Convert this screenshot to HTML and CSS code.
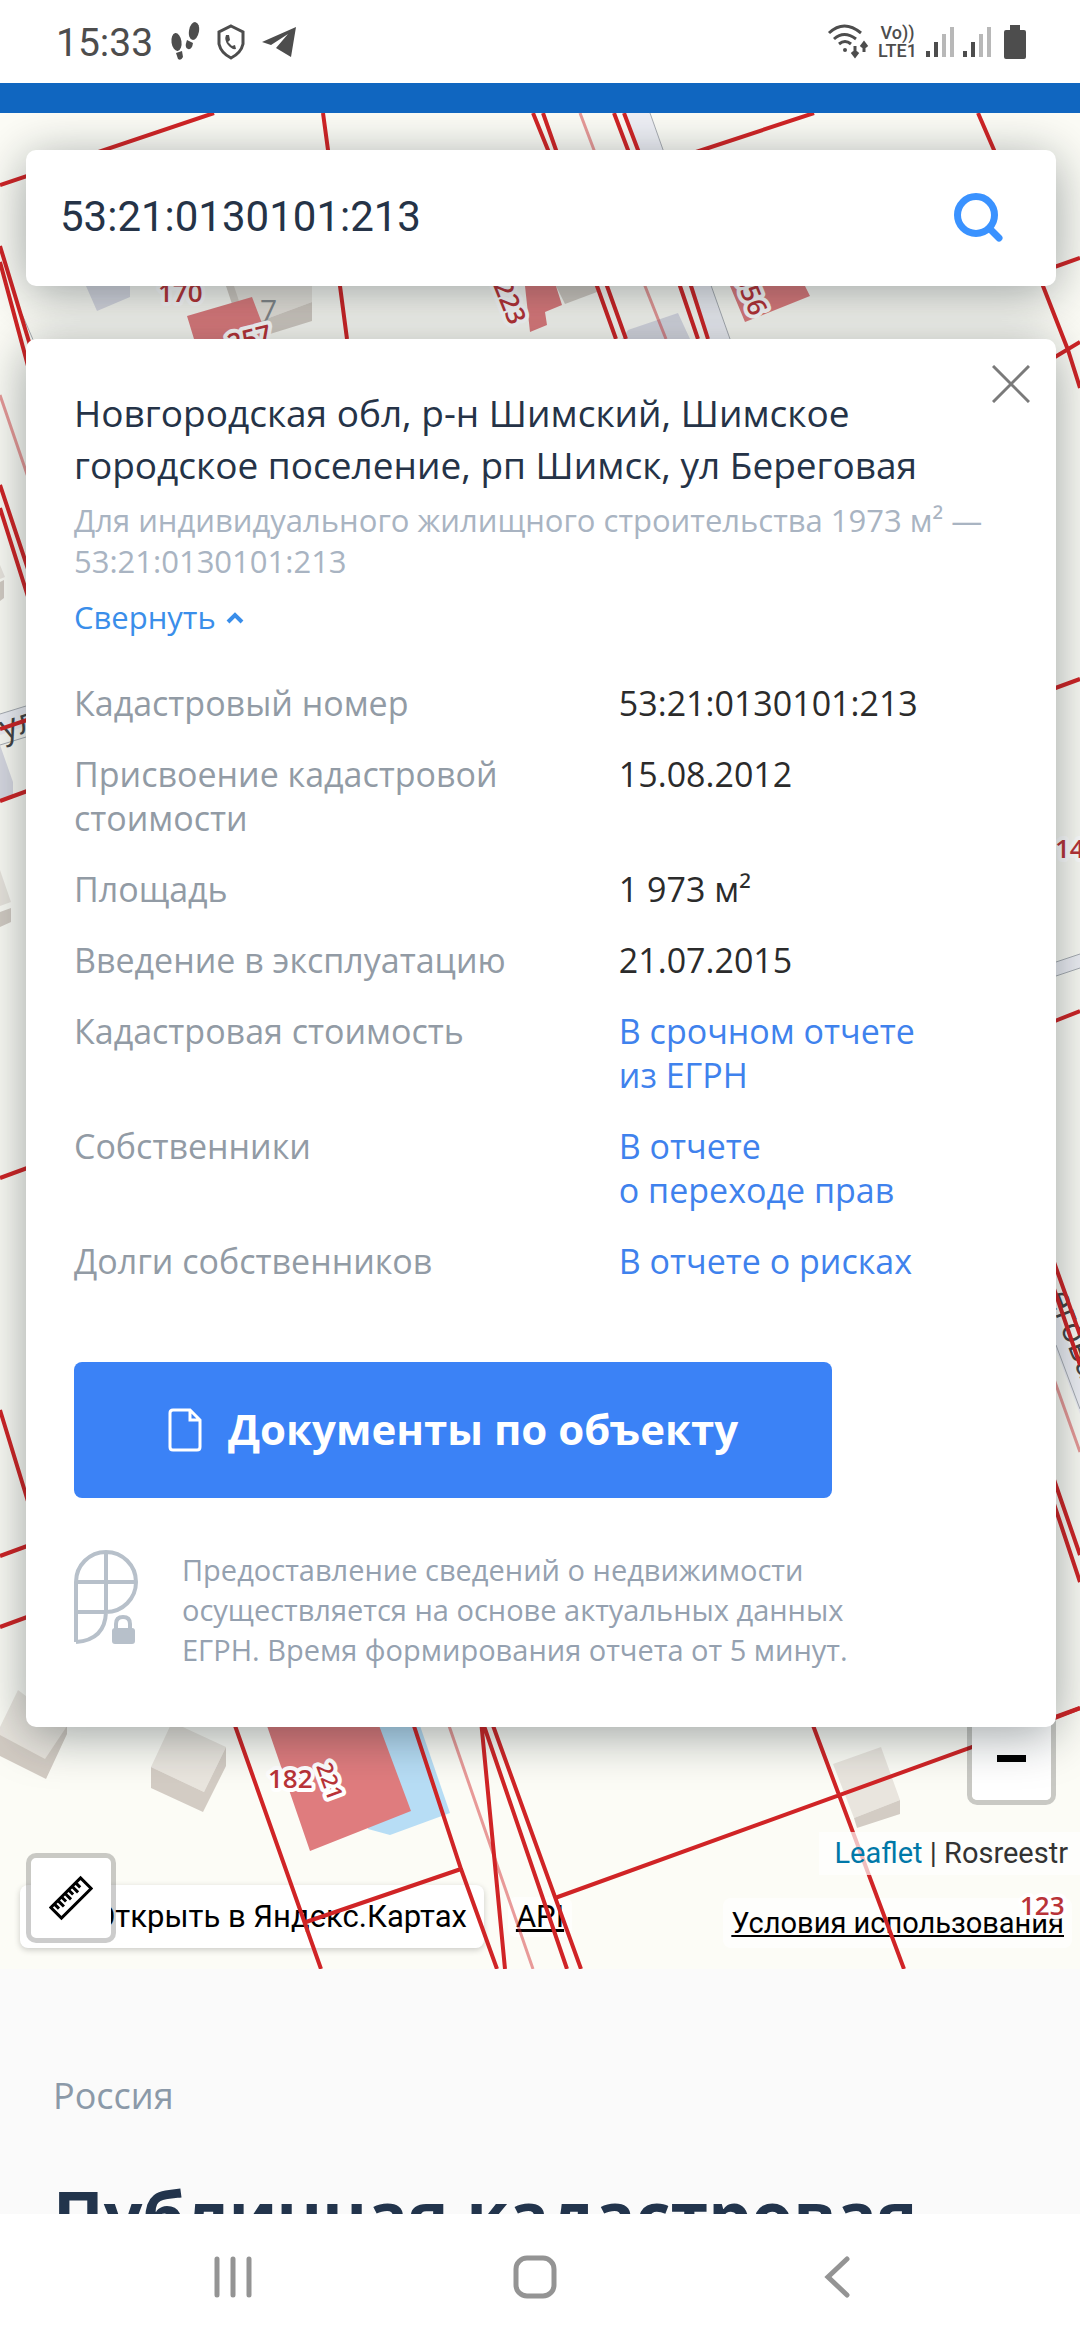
FILE: index.html
```
<!DOCTYPE html>
<html lang="ru">
<head>
<meta charset="utf-8">
<meta name="viewport" content="width=device-width, initial-scale=1">
<title>Публичная кадастровая карта</title>
<link rel="stylesheet" href="styles.css">
</head>
<body>
<div class="statusbar">
	<div class="status-group">
		<span class="clock">15:33</span>
		<svg class="st-icon" width="30" height="40" viewBox="0 0 30 40">
			<ellipse cx="6.500" cy="20" rx="5" ry="9" transform="rotate(-8 6.500 20)"/>
			<path d="M6 31l6-2 1 6q-2 4-5 2z"/>
			<ellipse cx="24" cy="9" rx="5" ry="9" transform="rotate(10 24 9)"/>
			<path d="M17 18l6 3q-1 7-5 6t-1-9z"/>
		</svg>
		<svg class="st-line" width="28" height="36" viewBox="0 0 28 36">
			<path d="M14 2l12 6v12q-2 9-12 14Q4 29 2 20V8z"/>
			<path class="st-fill" d="M9 11l3 0 1 5-2 2 4 4 3-1 1 4q-4 1-8-4-4-5-2-10z"/>
		</svg>
		<svg class="st-icon" width="34" height="32" viewBox="0 0 34 32">
			<path d="M34 1L29 31 14 22 26 8 9 19 0 16z"/>
		</svg>
	</div>
	<div class="status-group status-right">
		<svg class="st-line" width="42" height="36" viewBox="0 0 42 36">
			<path d="M2 9q15-14 32 0M7 15q10-9 22 0M12 20q6-5 12 0"/>
			<circle class="st-fill" cx="18" cy="26" r="2"/>
			<path d="M28 22v10m-3-4l3 4 3-4M37 28V19m-3 4l3-4 3 4"/>
		</svg>
		<span class="volte"><span>Vo))</span><span>LTE1</span></span>
		<svg class="st-icon" width="28" height="32" viewBox="0 0 28 32">
			<path d="M0 25h4v6H0zM8 16h4v15H8z"/><path class="st-dim" d="M16 8h4v23h-4zM24 1h4v30h-4z"/>
		</svg>
		<svg class="st-icon" width="28" height="32" viewBox="0 0 28 32">
			<path d="M0 25h4v6H0zM8 16h4v15H8z"/><path class="st-dim" d="M16 8h4v23h-4zM24 1h4v30h-4z"/>
		</svg>
		<svg class="st-icon battery" width="22" height="34" viewBox="0 0 22 34">
			<path d="M6 0h10v5h4q2 0 2 2v25q0 2-2 2H2q-2 0-2-2V7q0-2 2-2h4z"/>
		</svg>
	</div>
</div>

<div class="viewport">
<header class="topline"></header>

<section class="map">
	<!-- base layer: buildings and roads -->
	<svg class="map-layer" viewBox="0 113 1080 1856" preserveAspectRatio="xMidYMin slice">
		<g class="road">
			<path d="M624 113h26l80 226h-22zM0 714l26-8v20l-26 9zM1056 962l24-8v14l-24 8z"/>
			<path d="M1056 1310l24 64v40l-24-64z"/>
		</g>
		<path class="road-edge" d="M650 113l80 226M0 714l26-8M0 745l26-8M1056 962l24-8M1056 976l24-8M22 314l12 28M1056 1345l24 64"/>
		<g class="house">
			<path d="M226 286h86v16l-54 20zM0 565l5 12-5 2zM0 870l11 32-11 4zM0 1727l18-37 49 37-22 33L0 1741zM172 1722l54 25-22 45-53-25zM833 1764l48-17 19 53-46 18z"/>
		</g>
		<g class="house-side">
			<path d="M258 322l54-20v19l-42 13zM226 286h8l12 36h-8zM0 582l4-2v18l-4 3zM0 912l11-4v14l-11 5zM0 1735l45 24 22-33v8l-21 45-46-23z"/>
			<path d="M151 1767l53 25 22-45v19l-23 46-52-24zM854 1818l46-18v14l-43 14z"/>
			<path d="M556 286h42l-1 6-32 12z"/>
		</g>
		<g class="shed">
			<path d="M86 286h44v11l-33 14zM628 330l50-17 12 26h-68zM0 745l13 37v14l-13 6z"/>
		</g>
		<path class="water" d="M380 1720h38l32 93-60 22-22-6z"/>
		<text class="house-number" x="260" y="321">7</text>
		<text class="street" transform="translate(4 740) rotate(-18)">ул</text>
		<text class="street" transform="translate(1048 1295) rotate(69)">еговая у</text>
	</svg>

	<div class="ya-controls">
		<a class="ya-open" href="#">Открыть в Яндекс.Картах</a>
		<a class="ya-api" href="#">API</a>
		<a class="ya-terms" href="#">Условия использования</a>
	</div>

	<!-- cadastre layer: lies over the base map and its captions -->
	<svg class="map-layer" viewBox="0 113 1080 1856" preserveAspectRatio="xMidYMin slice">
		<g class="object">
			<path d="M187 316l65-19 16 42h-74zM525 286h31l6 19-17 7 2 13-17 7zM730 286h75l5 10-65 26zM265 1720h112l34 91-101 40z"/>
		</g>
		<g class="parcel">
			<path d="M0 185L214 113M323 113l5 37 12 136 7 53M533 113l15 37 49 136 19 53M543 113l13 37 51 136 19 53"/>
			<path d="M614 113l14 37 52 136 18 53M624 113l14 37 53 136 17 53M814 113L690 154M978 113l16 37 49 136 25 64 12 38M1080 258l-34 12M1050 360l30-18"/>
			<path d="M0 246l30 99M0 262l28 104M0 485l30 90M0 508l30 95M0 729l30-10M0 801l30-11M1050 690l30-11M1050 1023l30-12"/>
			<path d="M0 1178l30-11M0 1410l30 98M0 1556l30-11M0 1627l30-11M1050 1251l30 84M1050 1277l30 88M1050 1468l30 87M1050 1492l30 90M1050 1720l30-12"/>
			<path d="M233 1720l88 249M412 1720l49 149 36 100M306 1922l155-53M481 1720l24 249M482 1720l85 249M491 1720l90 249M555 1898l525-190M811 1720l93 249"/>
		</g>
		<path class="parcel faint" d="M580 113l14 37 51 136 21 53M0 395l30 88M447 1720l86 249M1050 1368l30 84"/>
		<g class="parcel-label">
			<text x="158" y="302">170</text>
			<text transform="translate(230 353) rotate(-14)">257</text>
			<text transform="translate(493 285) rotate(68)">223</text>
			<text transform="translate(734 276) rotate(68)">356</text>
			<text x="1055" y="858">14</text>
			<text x="268" y="1788">182</text>
			<text class="small" transform="translate(316 1766) rotate(70)">221</text>
			<text x="1020" y="1915">123</text>
		</g>
	</svg>

	<div class="zoom-control"><button class="zoom-out" type="button" aria-label="Уменьшить"></button></div>
	<button class="ruler" type="button" aria-label="Измерить расстояние">
		<svg width="44" height="46" viewBox="0 0 44 46"><g transform="translate(22 23) rotate(-45)"><path d="M-21-7.500h42v15h-42zM-16-7v6M-11-7v8M-6-7v6M-1-7v8M4-7v6M9-7v8M14-7v6"/></g></svg>
	</button>
	<div class="attribution"><a href="#">Leaflet</a> | Rosreestr</div>

	<div class="map-content">
		<form class="search">
			<input class="search-input" type="text" aria-label="Кадастровый номер или адрес" value="53:21:0130101:213">
			<button class="search-button" type="button" aria-label="Найти">
				<svg width="50" height="50" viewBox="0 0 50 50"><circle cx="22" cy="22" r="18.500"/><path d="M36 36l9 9"/></svg>
			</button>
		</form>

		<div class="card">
			<button class="close" type="button" aria-label="Закрыть">
				<svg width="38" height="38" viewBox="0 0 38 38"><path d="M1 1l36 36M37 1L1 37"/></svg>
			</button>
			<h2 class="address">Новгородская обл, р-н Шимский, Шимское городское поселение, рп Шимск, ул Береговая</h2>
			<p class="purpose">Для индивидуального жилищного строительства 1973 м² — 53:21:0130101:213</p>
			<a class="collapse" href="#">Свернуть
				<svg width="18" height="12" viewBox="0 0 18 12"><path d="M2 10l7-7 7 7"/></svg>
			</a>
			<dl class="props">
				<dt>Кадастровый номер</dt>
				<dd>53:21:0130101:213</dd>
				<dt>Присвоение кадастровой стоимости</dt>
				<dd>15.08.2012</dd>
				<dt>Площадь</dt>
				<dd>1 973 м²</dd>
				<dt>Введение в эксплуатацию</dt>
				<dd>21.07.2015</dd>
				<dt>Кадастровая стоимость</dt>
				<dd><a href="#">В срочном отчете<br>из ЕГРН</a></dd>
				<dt>Собственники</dt>
				<dd><a href="#">В отчете<br>о переходе прав</a></dd>
				<dt>Долги собственников</dt>
				<dd><a href="#">В отчете о рисках</a></dd>
			</dl>
			<button class="docs" type="button">
				<svg width="34" height="44" viewBox="0 0 34 44"><path d="M5 2h17l10 10v27q0 3-3 3H5q-3 0-3-3V5q0-3 3-3zM22 2v10h10"/></svg>
				<span>Документы по объекту</span>
			</button>
			<div class="notice">
				<svg width="64" height="96" viewBox="0 0 64 96">
					<path d="M2 92V32a30 30 0 1 1 30 30H2M32 2v60q-1 28-30 30M2 32h60"/>
					<path d="M42 79v-5q0-7 7-7t7 7v5"/>
					<rect x="38" y="78" width="23" height="16" rx="3"/>
				</svg>
				<p>Предоставление сведений о недвижимости<br>осуществляется на основе актуальных данных<br>ЕГРН. Время формирования отчета от 5 минут.</p>
			</div>
		</div>
	</div>
</section>

<main class="article">
	<a class="crumb" href="#">Россия</a>
	<h1>Публичная кадастровая карта</h1>
</main>
</div>

<nav class="navbar">
	<button type="button" aria-label="Недавние"><svg width="44" height="44" viewBox="0 0 44 44"><path d="M6 4v36M22 4v36M38 4v36"/></svg></button>
	<button type="button" aria-label="Домой"><svg width="44" height="44" viewBox="0 0 44 44"><rect x="3" y="3" width="38" height="38" rx="11"/></svg></button>
	<button type="button" aria-label="Назад"><svg width="44" height="44" viewBox="0 0 44 44"><path d="M32 4L13 22l19 18"/></svg></button>
</nav>
</body>
</html>
```

FILE: styles.css
```
* {
	box-sizing: border-box;
}

body {
	margin: 0;
	height: 100vh;
	display: flex;
	flex-direction: column;
	background: #fff;
	color: #253347;
	font-family: "Open Sans", "Noto Sans", sans-serif;
	overflow: hidden;
}

h1, h2, p, dl, dd {
	margin: 0;
}

a {
	color: #3f82ed;
	text-decoration: none;
}

button {
	padding: 0;
	border: 0;
	background: none;
	font-family: inherit;
}

svg {
	display: block;
	flex: none;
}

/* phone status bar */

.statusbar {
	flex: none;
	height: 83px;
	padding: 0 54px 0 56px;
	display: flex;
	justify-content: space-between;
	align-items: center;
	color: #4d4d4d;
	font-family: Roboto, sans-serif;
}

.status-group {
	display: flex;
	align-items: center;
	gap: 17px;
}

.status-right {
	gap: 9px;
}

.clock {
	font-size: 39px;
	line-height: 44px;
	padding-top: 3px;
}

.volte {
	display: flex;
	flex-direction: column;
	align-items: center;
	font-size: 18px;
	line-height: 18px;
	font-weight: 500;
}

.st-icon, .st-fill {
	fill: #4d4d4d;
}

.st-line {
	fill: none;
	stroke: #4d4d4d;
	stroke-width: 3;
}

.st-line .st-fill {
	stroke: none;
}

.st-dim {
	fill: #b8b8b8;
}

.battery {
	margin-left: 4px;
}

/* page */

.viewport {
	flex: 1;
	min-height: 0;
	overflow: hidden;
	background: #fafafa;
}

.topline {
	height: 30px;
	background: #1066c0;
}

.map {
	position: relative;
	overflow: hidden;
	background: #fcfcf6;
}

.map-layer {
	position: absolute;
	top: 0;
	left: 0;
	width: 100%;
	height: 100%;
}

.road { fill: #eff0f6; }
.road-edge { fill: none; stroke: #a9adb3; stroke-width: 1; }
.house { fill: #e9e5de; }
.house-side { fill: #d3ccc4; }
.shed { fill: #d9dae3; }
.water { fill: #b7ddf5; }
.object { fill: #df7c7e; }

.parcel {
	fill: none;
	stroke: #d02426;
	stroke-width: 4;
}

.faint {
	stroke-width: 3;
	opacity: .45;
}

.house-number {
	fill: #85898c;
	font-size: 30px;
}

.street {
	fill: #444;
	font-size: 34px;
}

.parcel-label {
	fill: #b93338;
	stroke: #fff;
	stroke-width: 8;
	stroke-linejoin: round;
	paint-order: stroke;
	font-size: 26px;
	font-weight: 600;
}

.parcel-label .small {
	font-size: 22px;
}

.map-content {
	position: relative;
	padding: 37px 24px 242px 26px;
}

/* search */

.search {
	display: flex;
	align-items: center;
	height: 136px;
	margin-bottom: 53px;
	padding: 0 52px 0 34px;
	border-radius: 10px;
	background: #fff;
	box-shadow: 0 8px 50px rgba(10, 25, 30, .4);
}

.search-input {
	flex: 1;
	min-width: 0;
	padding: 0 0 4px;
	border: 0;
	outline: 0;
	background: none;
	color: #253347;
	font-family: Roboto, sans-serif;
	font-size: 42px;
}

.search-button svg {
	fill: none;
	stroke: #3a92ff;
	stroke-width: 7;
	stroke-linecap: round;
}

/* object card */

.card {
	position: relative;
	padding: 48px 48px 57px;
	border-radius: 10px;
	background: #fff;
	box-shadow: 0 8px 50px rgba(10, 25, 30, .4);
}

.close {
	position: absolute;
	top: 26px;
	right: 26px;
}

.close svg {
	stroke: #7a7a7a;
	stroke-width: 3;
}

.address {
	font-size: 37px;
	line-height: 52px;
	font-weight: 400;
}

.purpose {
	margin-top: 9px;
	color: #a9b4c2;
	font-size: 31px;
	line-height: 41px;
}

.collapse {
	display: inline-flex;
	align-items: center;
	gap: 10px;
	margin-top: 15px;
	color: #3a8eea;
	font-size: 31px;
	line-height: 41px;
}

.collapse svg {
	fill: none;
	stroke: #3a8eea;
	stroke-width: 4;
}

.props {
	display: grid;
	grid-template-columns: 7fr 5fr;
	row-gap: 27px;
	margin-top: 43px;
	font-size: 34px;
	line-height: 44px;
}

.props dt {
	color: #929ba5;
}

.props dd {
	color: #2b2b2b;
}

.docs {
	display: flex;
	align-items: center;
	gap: 26px;
	height: 136px;
	margin-top: 79px;
	padding: 0 94px;
	border-radius: 8px;
	background: #3b82f6;
	color: #fff;
	font-size: 42px;
	font-weight: 700;
}

.docs span {
	padding-bottom: 4px;
}

.docs svg {
	fill: none;
	stroke: #fff;
	stroke-width: 3;
}

.notice {
	display: flex;
	gap: 44px;
	margin-top: 52px;
	color: #95a1b0;
	font-size: 29px;
	line-height: 40px;
}

.notice svg {
	fill: none;
	stroke: #b7c0ca;
	stroke-width: 4;
}

.notice rect {
	fill: #b7c0ca;
	stroke: none;
}

/* map controls */

.ya-controls {
	position: absolute;
	left: 20px;
	right: 8px;
	bottom: 21px;
	display: flex;
	align-items: center;
	font-family: Roboto, sans-serif;
	font-size: 31px;
}

.ya-controls a {
	color: #000;
}

.ya-open {
	padding: 0 17px 0 74px;
	line-height: 63px;
	border-radius: 8px;
	background: #fff;
	box-shadow: 0 2px 6px rgba(0, 0, 0, .2);
}

.ya-api, .ya-terms {
	padding: 0 8px;
	line-height: 40px;
	border-radius: 8px;
	background: rgba(255, 255, 255, .7);
	text-decoration: underline;
}

.ya-api {
	margin-left: 24px;
}

.ya-terms {
	align-self: flex-end;
	margin-left: auto;
	line-height: 50px;
	font-size: 29px;
}

.zoom-control {
	position: absolute;
	right: 24px;
	bottom: 164px;
	border: 5px solid rgba(0, 0, 0, .2);
	border-radius: 10px;
}

.zoom-out {
	display: flex;
	align-items: center;
	justify-content: center;
	width: 79px;
	height: 84px;
	border-radius: 5px;
	background: #fff;
}

.zoom-out::before {
	content: "";
	width: 29px;
	height: 7px;
	background: #000;
}

.ruler {
	position: absolute;
	left: 26px;
	bottom: 26px;
	width: 90px;
	height: 90px;
	display: flex;
	align-items: center;
	justify-content: center;
	border: 5px solid rgba(0, 0, 0, .2);
	border-radius: 10px;
	background: #fff;
	background-clip: padding-box;
}

.ruler svg {
	fill: none;
	stroke: #000;
	stroke-width: 3;
}

.attribution {
	position: absolute;
	right: 0;
	bottom: 94px;
	padding: 0 12px 0 15px;
	background: rgba(255, 255, 255, .7);
	color: #333;
	font-family: Roboto, sans-serif;
	font-size: 29px;
	line-height: 43px;
}

.attribution a {
	color: #0078a8;
}

/* article below the map */

.article {
	padding: 101px 53px 0;
}

.crumb {
	display: block;
	color: #8b99a8;
	font-size: 36px;
	line-height: 52px;
}

h1 {
	margin-top: 45px;
	color: #22344c;
	font-size: 68px;
	line-height: 96px;
}

/* phone navigation */

.navbar {
	flex: none;
	height: 126px;
	padding-right: 10px;
	display: flex;
	align-items: center;
	justify-content: center;
	gap: 258px;
	background: #fff;
}

.navbar svg {
	fill: none;
	stroke: #949494;
	stroke-width: 5;
	stroke-linecap: round;
}
```
